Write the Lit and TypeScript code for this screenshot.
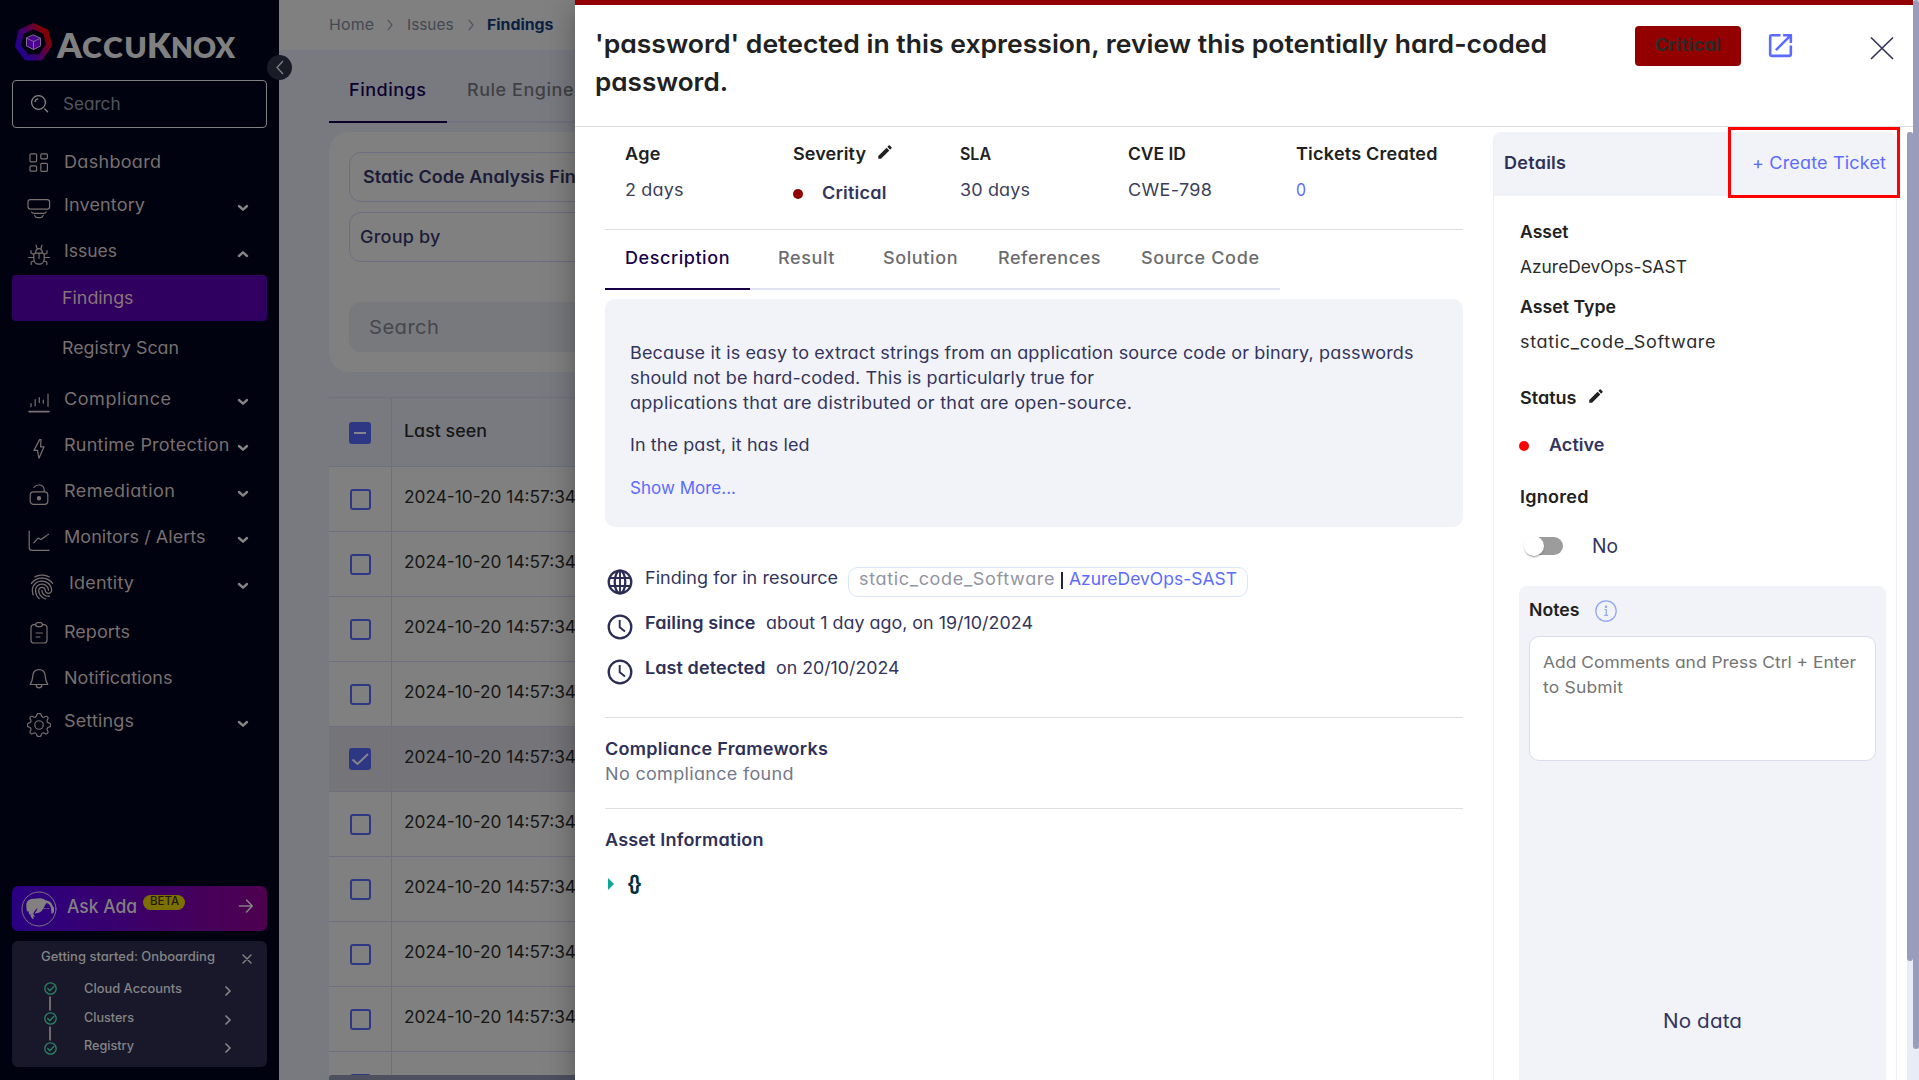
import { LitElement, html, svg, css, nothing } from "lit";
import { customElement, property, state } from "lit/decorators.js";

/** A single line of text, widened (and tracked, if need be) so that it fills `w` pixels. */
@customElement("fit-text")
class FitText extends LitElement {
  @property({ type: Number }) w = 0;
  @state() private scale = 1;
  @state() private spacing = 0;

  static styles = css`
    :host { display: inline-block; white-space: pre; flex: none; }
    .frame { display: inline-block; text-align: left; }
    .line { display: inline-block; transform-origin: 0 50%; }
  `;

  firstUpdated() {
    const line = this.renderRoot.querySelector(".line") as HTMLElement;
    const count = (this.textContent ?? "").length;
    const natural = line.getBoundingClientRect().width;
    if (!this.w || !natural) return;
    this.scale = Math.min(1.06, Math.max(0.92, this.w / natural));
    if (count > 1) this.spacing = (this.w / this.scale - natural) / (count - 1);
  }

  render() {
    return html`<span class="frame" style="width:${this.w}px"><span class="line" style="letter-spacing:${this.spacing}px;transform:scaleX(${this.scale})"><slot></slot></span></span>`;
  }
}

const t = (text: string, w: number, cls = "") => html`<fit-text class=${cls} .w=${w}>${text}</fit-text>`;

const icons = {
  dashboard: svg`<rect x="3" y="2.8" width="6.6" height="8" rx="1"/><rect x="13.8" y="2.8" width="6.6" height="5" rx="1"/><rect x="3" y="14.8" width="6.6" height="5.4" rx="1"/><rect x="13.8" y="12.3" width="6.6" height="8" rx="1"/>`,
  inventory: svg`<rect x="1" y="2.6" width="21.6" height="9.6" rx="2.4"/><path d="M4.6 15c.6 1.4 1.6 1.4 2.6 1.4h9.400c1 0 2 0 2.600-1.400M7.600 18.400c.6 2 1.800 2.200 2.800 2.200h3c1 0 2.200-.2 2.800-2.200"/>`,
  issues: svg`<path d="M6.800 11.800c0-1.400.8-1.600 1.600-1.600h7.200c.8 0 1.600.2 1.600 1.600v4.200c0 3-2.200 5.200-5.200 5.200s-5.200-2.200-5.200-5.200zM8.600 10c0-2.600 1-4.400 3.400-4.400s3.400 1.800 3.400 4.400M10.200 5.600 9 2.200M13.800 5.600 15 2.200M12 10.500v5M6.800 14.500H1.600M17.200 14.500h5.200M6.800 11.500 4 10V7.500M17.200 11.500 20 10V7.500M7.400 17.800 4.200 19v2.500M16.600 17.800l3.200 1.200v2.500"/>`,
  compliance: svg`<path d="M2 20.600h20" stroke-width="1.600"/><path d="M4 12.500v3.200M8.200 8.500v6.500M12.300 6.500v5M16.300 9v3.200M21 3.200v12"/>`,
  runtime: svg`<path d="M12.600 2.600 7 13.400h3.600l-.2 0 1.600 7.800 5-11.400h-3.400l.4-7.200z"/>`,
  remediation: svg`<rect x="3.200" y="8.800" width="17.600" height="12.600" rx="3.400"/><path d="M7 4.400c1-1.500 2.800-2.400 5-2.400 3.300 0 5.200 1.900 5.200 5.200v1.400"/><circle cx="12" cy="15.200" r="1.600" fill="currentColor"/>`,
  monitors: svg`<path d="M2.200 2v16.500c0 2 1 2.900 2.900 2.900H22"/><path d="M6.800 13.800 11 9.200c1-.9 1.600 1.600 3 1.200 1.500-.4 4.500-3.400 7.500-5.200"/>`,
  identity: svg`<path class="solid" d="M17.810 4.470c-.08 0-.16-.02-.23-.06C15.660 3.420 14 3 12.010 3c-1.980 0-3.860.47-5.570 1.410-.24.13-.54.04-.68-.2-.13-.24-.04-.55.2-.68C7.820 2.520 9.860 2 12.010 2c2.130 0 3.990.47 6.030 1.520.25.13.34.43.21.67-.09.18-.26.28-.44.28zM3.500 9.720c-.1 0-.2-.03-.29-.09-.23-.16-.28-.47-.12-.7.99-1.400 2.250-2.500 3.750-3.270C9.980 4.040 14 4.030 17.150 5.650c1.500.77 2.760 1.860 3.750 3.250.16.22.11.54-.12.7-.23.16-.54.11-.7-.12-.9-1.260-2.040-2.250-3.390-2.940-2.870-1.470-6.540-1.470-9.400.01-1.360.7-2.500 1.700-3.400 2.960-.08.14-.23.21-.39.21zm6.250 12.070c-.13 0-.26-.05-.35-.15-.87-.87-1.340-1.430-2.010-2.640-.69-1.230-1.050-2.730-1.050-4.340 0-2.970 2.540-5.390 5.660-5.390s5.660 2.420 5.660 5.390c0 .28-.22.5-.5.5s-.5-.22-.5-.5c0-2.420-2.090-4.390-4.660-4.390-2.570 0-4.660 1.970-4.660 4.390 0 1.440.32 2.770.93 3.850.64 1.150 1.080 1.640 1.850 2.420.19.2.19.51 0 .71-.11.1-.24.15-.37.15zm7.170-1.850c-1.190 0-2.240-.3-3.100-.89-1.490-1.010-2.380-2.650-2.380-4.390 0-.28.22-.5.5-.5s.5.22.5.5c0 1.410.72 2.740 1.940 3.560.71.48 1.540.71 2.540.71.24 0 .64-.03 1.040-.1.27-.05.53.13.58.41.05.27-.13.53-.41.58-.57.11-1.070.12-1.210.12zM14.910 22c-.04 0-.09-.01-.13-.02-1.590-.44-2.630-1.030-3.720-2.100-1.400-1.390-2.170-3.240-2.170-5.220 0-1.620 1.380-2.940 3.080-2.940 1.700 0 3.080 1.320 3.080 2.940 0 1.070.93 1.940 2.080 1.940s2.080-.87 2.080-1.940c0-3.770-3.250-6.830-7.250-6.830-2.840 0-5.440 1.580-6.610 4.030-.39.81-.59 1.760-.59 2.800 0 .78.07 2.010.67 3.610.1.26-.03.55-.29.64-.26.1-.55-.04-.64-.29-.49-1.310-.73-2.610-.73-3.960 0-1.200.23-2.290.68-3.240 1.330-2.790 4.280-4.600 7.510-4.600 4.550 0 8.250 3.510 8.250 7.830 0 1.620-1.380 2.940-3.080 2.940s-3.080-1.320-3.080-2.940c0-1.070-.93-1.940-2.080-1.940s-2.080.87-2.080 1.940c0 1.710.66 3.310 1.870 4.510.95.94 1.860 1.460 3.270 1.850.27.07.42.35.35.61-.05.23-.26.38-.47.38z"/>`,
  reports: svg`<path d="M8.600 3.600H7c-1.900 0-3 1-3 2.800v12.800c0 1.900 1 2.800 3 2.800h10c2 0 3-.9 3-2.800V6.400c0-1.800-1.100-2.800-3-2.800h-1.600M9 12h6.500M9 16h4"/><rect x="8.600" y="1.600" width="6.800" height="4" rx="2"/>`,
  notifications: svg`<path d="M12 2.600c-4 0-6 2.700-6.200 6.500-.2 3.600-.7 5-2.600 8.400h17.600c-1.900-3.400-2.400-4.800-2.600-8.400C18 5.300 16 2.600 12 2.600zM9 17.800c.3 2 1.400 3 3 3s2.700-1 3-3"/>`,
  settings: svg`<g transform="translate(-.08 -.08) scale(1.510)" stroke-width=".78"><circle cx="8" cy="8" r="2.800"/><path d="M9.400 1.200c-.4-1.200-2.400-1.200-2.800 0l-.2.700a1.400 1.400 0 0 1-2 .8l-.5-.3c-1.200-.6-2.300.6-1.700 1.700l.3.500a1.400 1.400 0 0 1-.8 2l-.5.1c-1.300.5-1.300 2.200 0 2.600l.5.200a1.400 1.400 0 0 1 .8 2l-.3.500c-.6 1.200.6 2.300 1.700 1.700l.5-.3a1.400 1.400 0 0 1 2 .8l.2.600c.4 1.200 2.400 1.200 2.800 0l.2-.6a1.400 1.400 0 0 1 2-.8l.5.300c1.200.6 2.300-.6 1.700-1.700l-.3-.5a1.400 1.400 0 0 1 .8-2l.5-.2c1.300-.4 1.300-2.100 0-2.600l-.5-.1a1.400 1.400 0 0 1-.8-2l.3-.5c.6-1.200-.6-2.300-1.700-1.700l-.5.300a1.400 1.400 0 0 1-2-.8z"/></g>`,
};

type NavItem = { label: string; w: number; icon: keyof typeof icons; cls?: string; caret?: "down" | "up" };

const NAV_TOP: NavItem[] = [
  { label: "Dashboard", w: 97, icon: "dashboard", cls: "level" },
  { label: "Inventory", w: 81, icon: "inventory", cls: "tight", caret: "down" },
  { label: "Issues", w: 53, icon: "issues", caret: "up" },
];
const NAV_BOTTOM: NavItem[] = [
  { label: "Compliance", w: 107, icon: "compliance", cls: "loose", caret: "down" },
  { label: "Runtime Protection", w: 165.500, icon: "runtime", caret: "down" },
  { label: "Remediation", w: 111, icon: "remediation", caret: "down" },
  { label: "Monitors / Alerts", w: 141.500, icon: "monitors", caret: "down" },
  { label: "Identity", w: 65, icon: "identity", cls: "wide", caret: "down" },
  { label: "Reports", w: 66, icon: "reports", cls: "level loose-sm" },
  { label: "Notifications", w: 108.500, icon: "notifications", cls: "level" },
  { label: "Settings", w: 70, icon: "settings", cls: "tight", caret: "down" },
];

@customElement("side-nav")
class SideNav extends LitElement {
  static styles = css`
    :host { display: flex; flex-direction: column; width: 279px; height: 1080px; box-sizing: border-box;
      background: #00020f; color: #7a7070; padding: 0 12px 13px; font-size: 17px; line-height: 24px; }
    svg { display: block; fill: none; stroke: currentColor; stroke-linecap: round; stroke-linejoin: round; flex: none; }
    .logo { display: flex; height: 80px; box-sizing: border-box; padding: 22px 0 0 1px; color: #808080; }
    .word { font: 800 28.5px/36px Lato, "Liberation Sans", sans-serif; display: flex; align-items: baseline; padding: 5px 0 0 4px; }
    .big { font-size: 33.5px; }
    .search { display: flex; align-items: center; height: 45px; border: 1px solid #7f807f; border-radius: 4px; padding: 0 0 1px 17px; color: #52555c; gap: 13px; }
    .search svg { color: #8a8683; }
    nav { margin-top: 11px; }
    .item { height: 46px; display: flex; align-items: center; padding-left: 15px; }
    .item svg { stroke-width: 1.2; }
    .item .icon { margin-top: 7px; margin-right: 13px; }
    .level .icon { margin-top: 2px; }
    .tight { margin-top: -3px; }
    .loose { margin-top: 5px; }
    .loose-sm { margin-top: 3px; }
    .wide .icon { margin: 7px 12px 0 0; }
    .solid { fill: currentColor; stroke: none; }
    .caret { margin: 6px 18px 0 auto; color: #858383; }
    .item .caret { stroke-width: 2.4; }
    .sub { height: 46px; display: flex; align-items: center; padding: 0 0 1px 49.5px; border-radius: 4px; box-sizing: border-box; }
    .sub.on { background: #300060; margin-top: 1px; color: #8a7577; }
    .sub.scan { margin-top: 4px; padding-bottom: 0; }
    .ada { margin-top: auto; height: 45px; border-radius: 6px; background: linear-gradient(90deg, #2a0082, #4e004e);
      display: flex; align-items: center; padding-left: 9px; color: #828080; }
    .ada .name { margin: -5px 6px 0 10px; font-size: 18.5px; font-weight: 500; }
    .beta { background: #7c7000; color: #1d1a10; border-radius: 8px; height: 15px; width: 42px; margin-top: -13px; font-size: 11.5px; line-height: 13px; text-align: center; font-weight: 500; }
    .ada .go { margin: -5px 13px 0 auto; }
    .start { margin-top: 10px; height: 126px; box-sizing: border-box; background: #18182a; border-radius: 6px; color: #858585; font-size: 12.8px; font-weight: 500; }
    .start header { display: flex; align-items: center; height: 32px; padding: 0 15px 0 29px; justify-content: space-between; }
    .start header svg { margin-top: 3px; }
    .steps { display: flex; padding-left: 32px; }
    .rows { flex: 1; padding: 2px 36px 0 27px; }
    .row { display: flex; align-items: center; justify-content: space-between; height: 28.6px; }
    .row svg { margin-top: 4px; }
  `;

  private item(n: NavItem) {
    const size = n.icon === "identity" ? 30 : 24;
    return html`<div class="item ${n.cls ?? ""}">
      <svg class="icon" width=${size} height=${size} viewBox="0 0 24 24">${icons[n.icon]}</svg>
      ${t(n.label, n.w)}
      ${n.caret
        ? html`<svg class="caret" width="12" height="8" viewBox="0 0 12 8"><path d=${n.caret === "down" ? "M2 2l4 3.700 4-3.700" : "M2 6l4-3.700 4 3.700"}></path></svg>`
        : nothing}
    </div>`;
  }

  render() {
    return html`
      <div class="logo">
        <svg width="40" height="40" viewBox="0 0 40 40">
          <defs><linearGradient id="ring" x1="0.1" y1="0.7" x2="0.85" y2="0.25"><stop offset="0" stop-color="#26008a"/><stop offset=".5" stop-color="#4b0060"/><stop offset="1" stop-color="#800008"/></linearGradient></defs>
          <path d="M20.500 4.200 33 9.900 36 23 27.500 35.500H13.500L5 24 8 9.900z" stroke="url(#ring)" stroke-width="5.800"/>
          <path d="M20.500 13l7 3.200v7.800l-7 3.500-7-3.500v-7.800z" fill="#4b0093" stroke="#7c6a90" stroke-width="1"/>
          <path d="M13.500 16.200l7 3.300 7-3.300M20.500 19.500v8" stroke="#7c6a90" stroke-width="1"/>
        </svg>
        <div class="word">${t("A", 25, "big")}${t("CCU", 65)}${t("K", 24, "big")}${t("NOX", 64)}</div>
      </div>
      <div class="search">
        <svg width="20" height="20" viewBox="0 0 20 20" stroke-width="1.300"><circle cx="8.500" cy="8.500" r="6.900"/><path d="M5 7.500c.4-1.400 1.400-2.300 2.800-2.600M14.800 15l2.800 2.800"/></svg>
        ${t("Search", 57.500)}
      </div>
      <nav>
        ${NAV_TOP.map((n) => this.item(n))}
        <div class="sub on">${t("Findings", 71.500)}</div>
        <div class="sub scan">${t("Registry Scan", 117)}</div>
        ${NAV_BOTTOM.map((n) => this.item(n))}
      </nav>
      <div class="ada">
        <svg width="36" height="36" viewBox="0 0 36 36"><circle cx="18" cy="18" r="17" stroke-width=".9"/>
          <path fill="currentColor" stroke="none" d="M5.500 12c1.500-3.500 4.500-4.600 8-4.200 3.500-1 8.500-.8 11 1.400 3.500.3 6 2 7 5.300l1.500 2.200v4.600l-2.500 1.700-.5-6c-.8-3-2.500-4.500-4.500-5-1.500 1.800-2 3.800-3.300 5.800-1.600 3-4.600 4.800-8.700 4.600 1.500-1.500 2.600-3.200 3-5.400-2 1.500-3.500 3.500-4.300 6l2 3-2-.8.4 3.300c-2.200-1.500-3.200-3.300-3.300-5.600l-1.500.6c.2-1.400 0-2.400-.6-3.400l-1.300.4C5.500 17.500 5 14.500 5.500 12z"/>
          <path d="M23 17.500h2M26.500 17.500h1.500" stroke-width=".7"/></svg>
        ${t("Ask Ada", 70, "name")}
        <span class="beta">${t("BETA", 29)}</span>
        <svg class="go" width="16" height="16" viewBox="0 0 16 16" stroke-width="1.600"><path d="M1.500 8h12.500M8.500 2l5.800 6-5.800 6"/></svg>
      </div>
      <div class="start">
        <header>${t("Getting started: Onboarding", 174)}<svg width="10" height="10" viewBox="0 0 10 10" stroke-width="1.400"><path d="M1 1l8 8M9 1l-8 8"/></svg></header>
        <div class="steps">
          <svg width="13" height="84" viewBox="0 0 13 84">
            <path stroke="#857f7c" stroke-width="1.600" stroke-linecap="butt" d="M6 23.500v14M6 53.500v14"/>
            <g stroke="#2a8463" stroke-width="1.300">
              <circle cx="6.500" cy="15.500" r="5.700"/><path d="M3.800 15.500l2 2.200 4-4.200"/>
              <circle cx="6.500" cy="45.500" r="5.700"/><path d="M3.800 45.500l2 2.200 4-4.200"/>
              <circle cx="6.500" cy="75.500" r="5.700"/><path d="M3.800 75.500l2 2.200 4-4.200"/>
            </g>
          </svg>
          <div class="rows">
            ${([["Cloud Accounts", 98], ["Clusters", 50], ["Registry", 50]] as [string, number][]).map(
              ([label, w]) => html`<div class="row">${t(label, w)}<svg width="6" height="10" viewBox="0 0 6 10" stroke-width="1.700"><path d="M1 1l4 4-4 4"/></svg></div>`)}
          </div>
        </div>
      </div>`;
  }
}

@customElement("findings-page")
class FindingsPage extends LitElement {
  static styles = css`
    :host { display: block; background: #797a80; height: 1080px; line-height: 24px; font-size: 17px; }
    .top { height: 50px; background: #808080; display: flex; align-items: center; padding-left: 50px; font-size: 15px; color: #444853; }
    .top svg { margin: 0 14px 0 13px; }
    .top svg.second { margin: 0 13px 0 14px; }
    .here { color: #0a2042; font-weight: 700; }
    .tabs { margin-left: 50px; height: 71px; border-bottom: 2px solid #70727d; display: flex; font-weight: 500; }
    .tab { padding: 28px 20px 0; color: #404044; }
    .tab.on { color: #0c0030; border-bottom: 2px solid #0c0028; width: 78px; margin-bottom: -2px; }
    .card { margin: 9px 0 0 50px; height: 240px; box-sizing: border-box; background: #808080; border-radius: 20px; padding: 20px 0 0 20px; }
    .field { height: 47px; border: 1px solid #6b6e80; border-radius: 12px; display: flex; align-items: center; padding: 0 0 1px 12.5px; margin-bottom: 10px; color: #1b1b38; font-weight: 600; }
    .field.group { font-weight: 500; padding: 0 0 0 10px; height: 48px; }
    .find { height: 48px; border-radius: 12px; background: #78797c; margin-top: 40px; display: flex; align-items: center; padding: 2px 0 0 19.5px; color: #44474c; font-size: 19px; }
    .table { margin: 25px 0 0 50px; border-top: 1px solid #70727e; color: #161616; }
    .row { display: flex; height: 65px; box-sizing: border-box; border-bottom: 1px solid #6e7080; background: #808080; }
    .head { height: 69px; background: #797a80; font-weight: 500; }
    .picked { background: #757579; }
    .check { width: 62px; border-right: 1px solid #6e7080; display: flex; align-items: center; justify-content: center; }
    .head .check { padding-top: 2px; }
    .box { width: 17px; height: 17px; border: 2.500px solid #2e3783; border-radius: 3px; }
    .box.full { width: 22px; height: 22px; border: 0; background: #2e3783; }
    .box svg { display: block; fill: none; stroke: #85858c; stroke-width: 2; }
    .cell { padding-left: 12px; display: flex; align-items: center; padding-bottom: 4px; }
    .head .cell { padding-bottom: 2px; }
  `;

  private box(kind: string) {
    if (kind === "") return html`<span class="box"></span>`;
    return html`<span class="box full"><svg width="22" height="22" viewBox="0 0 22 22"><path d=${kind === "minus" ? "M5 11h12" : "M3.500 11.500l5 4.500L19 6"}></path></svg></span>`;
  }

  render() {
    const rows = Array.from({ length: 9 }, (_, i) => i === 4);
    const sep = (cls: string) => html`<svg class=${cls} width="6" height="12" viewBox="0 0 6 12" fill="none" stroke="#50525f" stroke-width="1.200"><path d="M.8.8l4.200 5.200-4.200 5.200"></path></svg>`;
    return html`
      <div class="top">${t("Home", 45)}${sep("")}${t("Issues", 46.500)}${sep("second")}${t("Findings", 66.500, "here")}</div>
      <div class="tabs"><div class="tab on">${t("Findings", 77)}</div><div class="tab">${t("Rule Engine", 106.500)}</div></div>
      <div class="card">
        <div class="field">${t("Static Code Analysis Findings", 261)}</div>
        <div class="field group">${t("Group by", 80.500)}</div>
        <div class="find">${t("Search", 70)}</div>
      </div>
      <div class="table">
        <div class="row head"><div class="check">${this.box("minus")}</div><div class="cell">${t("Last seen", 83)}</div></div>
        ${rows.map((on) => html`<div class="row ${on ? "picked" : ""}"><div class="check">${this.box(on ? "tick" : "")}</div><div class="cell">${t("2024-10-20 14:57:34", 172)}</div></div>`)}
        <div class="row"><div class="check">${this.box("")}</div></div>
      </div>`;
  }
}

const META: [string, number, string, number][] = [
  ["Age", 35.500, "2 days", 58.500],
  ["Severity", 73, "", 0],
  ["SLA", 31, "30 days", 70],
  ["CVE ID", 58, "CWE-798", 84],
  ["Tickets Created", 141.500, "0", 10],
];

const TABS: [string, number, number][] = [
  ["Description", 104.500, 145],
  ["Result", 56.500, 112.500],
  ["Solution", 74.500, 116],
  ["References", 102.500, 142],
  ["Source Code", 118, 159.500],
];

const pencil = html`<svg class="pencil" width="18" height="18" viewBox="0 0 24 24"><path d="M3 17.250V21h3.750L17.810 9.940l-3.750-3.750L3 17.250zM20.710 7.040c.39-.39.39-1.020 0-1.410l-2.340-2.340c-.39-.39-1.020-.39-1.410 0l-1.830 1.830 3.750 3.750 1.830-1.830z" fill="#212121"></path></svg>`;
const clock = html`<svg class="lead" width="30" height="30" viewBox="0 0 30 30"><circle cx="15" cy="15" r="11.300"/><path d="M14.700 8v7.300l5.300 4.200" stroke-width="1.900"/></svg>`;

@customElement("finding-drawer")
class FindingDrawer extends LitElement {
  static styles = css`
    :host { display: flex; width: 1344px; height: 1080px; background: #fff; color: #33345c; font-size: 17px; line-height: 24px; }
    svg { display: block; flex: none; }
    .body { flex: 1; display: flex; flex-direction: column; }
    .bar { height: 5px; background: #920000; flex: none; }
    header { height: 121px; border-bottom: 1px solid #dedee0; display: flex; padding-left: 20px; flex: none; }
    h1 { margin: 0; padding-top: 20px; font-size: 25.500px; line-height: 38px; font-weight: 600; color: #212121; width: 1040px; display: flex; flex-direction: column; align-items: flex-start; }
    .badge { margin-top: 21px; width: 106px; height: 40px; background: #920000; border-radius: 4px; color: #2b2b2b; font-weight: 700; line-height: 38px; text-align: center; }
    .open { margin: 25px 0 0 24px; }
    .close { margin: 31px 0 0 74px; }
    .cols { flex: 1; display: flex; min-height: 0; }
    .left { width: 858px; margin: 0 30px; }
    .meta { display: grid; grid-template-columns: repeat(5, 167.650px); height: 102px; box-sizing: border-box; padding: 15px 0 0 20px; }
    .k { display: flex; font-weight: 600; color: #212121; margin-bottom: 12px; }
    .v { color: #3b3f58; }
    .pencil { margin: 1px 0 0 10px; }
    .sev { display: flex; align-items: center; font-weight: 600; }
    .k + .sev { margin-top: 15px; }
    .dot { width: 10px; height: 10px; border-radius: 50%; background: #920000; margin-right: 19px; margin-top: 2px; }
    .link, .v.link { color: #5b6bff; }
    .rule { border-top: 1px solid #dedee0; }
    .tabs { display: flex; width: 675px; height: 58px; border-bottom: 2px solid #e1e3f0; }
    .tab { padding-top: 16px; text-align: center; color: #6b6b6e; font-weight: 500; }
    .tab.on { color: #170048; border-bottom: 2px solid #170048; height: 42px; }
    .desc { margin-top: 9px; height: 228px; box-sizing: border-box; padding: 42px 25px 0; background: #f2f3f9; border-radius: 10px; line-height: 25px; }
    .desc p { margin: 0 0 17px; display: flex; flex-direction: column; align-items: flex-start; }
    .desc p.link { margin-top: 18px; }
    .facts { margin: 28px 0 27px; }
    .fact { display: flex; align-items: center; height: 45px; }
    .lead { margin: 9px 10px 0 0; fill: none; stroke: #2b2d56; stroke-width: 2.300; }
    .b { font-weight: 600; color: #2f3058; }
    .gap { margin-right: 10.500px; }
    .chip { margin: 9px 0 0 10px; height: 28px; border: 1px solid #dbe5fb; border-radius: 10px; padding: 0 10px; display: flex; gap: 6px; line-height: 23px; color: #9093a2; }
    .pipe { width: 2px; height: 17px; background: #22233f; margin-top: 4px; }
    .sect { padding-top: 19px; line-height: 25px; display: flex; flex-direction: column; align-items: flex-start; }
    .muted { color: #75778a; }
    .comp { height: 71px; }
    .tree { display: flex; align-items: center; margin-top: 19px; padding-left: 3px; height: 24px; }
    .brace { margin-left: 13px; color: #00303a; font-weight: 700; font-size: 21px; line-height: 24px; }
    .panel { width: 402px; margin-top: 5px; border: solid #eeeff7; border-width: 0 1px; border-radius: 8px 8px 0 0; }
    .ph { height: 64px; display: flex; align-items: center; justify-content: space-between; background: #f2f3f9; padding: 0 10px 2px; border-radius: 8px 8px 0 0; box-sizing: border-box; }
    .pb { padding: 24px 10px 0 26px; color: #2b2b2b; display: flex; flex-direction: column; align-items: flex-start; }
    .pb .k { margin: 0 0 11px; }
    .pb .second { margin-top: 16px; }
    .pb .status { margin: 32px 0 23px; }
    .pb .sev { margin: 0 0 28px -1px; color: #33345c; }
    .pb .red { background: #ff0000; margin-right: 20px; margin-top: 1px; }
    .pb .ign { margin-bottom: 25px; }
    .switch { display: flex; align-items: center; height: 24px; font-size: 19.500px; color: #33345c; }
    .track { width: 34px; height: 18px; border-radius: 9px; background: #9c9c9c; margin: 0 29px 0 9px; display: flex; align-items: center; }
    .knob { width: 20px; height: 20px; flex: none; border-radius: 50%; background: #fff; margin-left: -5px; box-shadow: 0 2px 2px -1px rgba(0,0,0,.3), 0 1px 2px rgba(0,0,0,.14); }
    .notes { margin: 28px 0 0 -1px; width: 347px; height: 494px; border-radius: 8px 8px 0 0; background: #f2f3f9; padding: 12px 10px 0; display: flex; flex-direction: column; }
    .nh { display: flex; font-weight: 600; color: #212121; height: 24px; }
    .nh svg { margin: 2px 0 0 15px; }
    .area { margin-top: 14px; height: 123px; border: 1px solid #d9dcec; border-radius: 10px; background: #fff; color: #757575; font-size: 16.500px; line-height: 25px; padding-left: 13px; }
    .area div { padding-top: 13px; display: flex; flex-direction: column; align-items: flex-start; }
    .empty { margin-top: 248px; align-self: center; font-size: 19.500px; color: #33345c; }
    .inner { width: 6px; margin: 5px 0 0 auto; background: #e9ebf7; }
    .outer { width: 6px; background: #e9ebf7; }
    .thumb { background: #999cba; border-radius: 3px; height: 829px; }
    .outer .thumb { height: 1049px; }
  `;

  private meta([k, kw, v, vw]: [string, number, string, number]) {
    if (k === "Severity")
      return html`<div><div class="k">${t(k, kw)}${pencil}</div><div class="sev"><span class="dot"></span>${t("Critical", 64.500)}</div></div>`;
    return html`<div><div class="k">${t(k, kw)}</div><div class="v ${v === "0" ? "link" : ""}">${t(v, vw)}</div></div>`;
  }

  render() {
    return html`
      <div class="body">
        <div class="bar"></div>
        <header>
          <h1>${t("'password' detected in this expression, review this potentially hard-coded", 952)}${t("password.", 133)}</h1>
          <div class="badge">${t("Critical", 66)}</div>
          <svg class="open" width="31" height="31" viewBox="0 0 24 24"><path fill="#5b6bff" d="M19 19H5V5h7V3H5c-1.110 0-2 .9-2 2v14c0 1.100.89 2 2 2h14c1.100 0 2-.9 2-2v-7h-2v7zM14 3v2h3.590l-9.830 9.830 1.410 1.410L19 6.410V10h2V3h-7z"></path></svg>
          <svg class="close" width="24" height="24" viewBox="0 0 24 24" stroke="#35355f" stroke-width="1.700"><path d="M1 1.500l22 21.500M23 1.500L1 23"></path></svg>
        </header>
        <div class="cols">
          <div class="left">
            <div class="meta">${META.map((m) => this.meta(m))}</div>
            <div class="rule"></div>
            <div class="tabs">${TABS.map(([label, w, box], i) => html`<div class="tab ${i === 0 ? "on" : ""}" style="width:${box}px">${t(label, w)}</div>`)}</div>
            <div class="desc">
              <p>${t("Because it is easy to extract strings from an application source code or binary, passwords", 783.500)}${t("should not be hard-coded. This is particularly true for", 464)}${t("applications that are distributed or that are open-source.", 502)}</p>
              <p>${t("In the past, it has led", 179.500)}</p>
              <p class="link">${t("Show More...", 106)}</p>
            </div>
            <div class="facts">
              <div class="fact">
                <svg class="lead" width="30" height="30" viewBox="0 0 30 30"><circle cx="15" cy="15" r="11.300"/><ellipse cx="15" cy="15" rx="5.300" ry="11.300"/><path d="M15 3.500v23M4.500 11h21M4.500 19h21" stroke-width="1.900"/></svg>
                ${t("Finding for in resource", 193)}
                <div class="chip">${t("static_code_Software", 195.500)}<span class="pipe"></span>${t("AzureDevOps-SAST", 168, "link")}</div>
              </div>
              <div class="fact">${clock}${t("Failing since", 110.500, "b gap")}${t("about 1 day ago, on 19/10/2024", 267)}</div>
              <div class="fact">${clock}${t("Last detected", 120.500, "b gap")}${t("on 20/10/2024", 123.500)}</div>
            </div>
            <div class="rule"></div>
            <div class="sect comp">${t("Compliance Frameworks", 223, "b")}${t("No compliance found", 188.500, "muted")}</div>
            <div class="rule"></div>
            <div class="sect">${t("Asset Information", 158.500, "b")}</div>
            <div class="tree"><svg width="6" height="12" viewBox="0 0 6 12"><path d="M0 0l6 6-6 6z" fill="#0fa596"></path></svg>${t("{}", 15, "brace")}</div>
          </div>
          <div class="panel">
            <div class="ph">${t("Details", 62, "b")}${t("+ Create Ticket", 134, "link")}</div>
            <div class="pb">
              <div class="k">${t("Asset", 48.500)}</div>${t("AzureDevOps-SAST", 167)}
              <div class="k second">${t("Asset Type", 96)}</div>${t("static_code_Software", 195.500)}
              <div class="k status">${t("Status", 56.500)}${pencil}</div>
              <div class="sev"><span class="dot red"></span>${t("Active", 55.500)}</div>
              <div class="k ign">${t("Ignored", 68.500)}</div>
              <div class="switch"><span class="track"><span class="knob"></span></span>${t("No", 26)}</div>
              <div class="notes">
                <div class="nh">${t("Notes", 50.500)}<svg width="22" height="22" viewBox="0 0 22 22" fill="none" stroke="#8fa4f5" stroke-width="1.200"><circle cx="11" cy="11" r="10.200"/><path d="M9.500 9.500h1.700v5.500M9.300 15.300h3.600"/><circle cx="11" cy="6.700" r=".6" fill="#8fa4f5"/></svg></div>
                <div class="area"><div>${t("Add Comments and Press Ctrl + Enter", 313)}${t("to Submit", 80)}</div></div>
                ${t("No data", 79, "empty")}
              </div>
            </div>
          </div>
          <div class="inner"><div class="thumb"></div></div>
        </div>
      </div>
      <div class="outer"><div class="thumb"></div></div>`;
  }
}

@customElement("app-root")
class AppRoot extends LitElement {
  static styles = css`
    :host { display: flex; position: relative; width: 1919px; height: 1080px; overflow: hidden;
      font-family: Inter, "Noto Sans", sans-serif; font-feature-settings: "cv11" 1; }
    side-nav { flex: none; }
    findings-page { flex: 1; min-width: 0; overflow: hidden; }
    .fold { position: absolute; left: 267px; top: 55px; width: 25px; height: 25px; border-radius: 50%; background: #191c26; }
    .fold svg { display: block; margin: 5px 0 0 9px; }
    finding-drawer { position: absolute; left: 575px; top: 0; box-shadow: 0 8px 10px -5px rgba(0,0,0,.2), 0 16px 24px 2px rgba(0,0,0,.14), 0 6px 30px 5px rgba(0,0,0,.12); }
    .mark { position: absolute; left: 1728px; top: 127px; width: 166px; height: 65px; border: 3px solid #ff0000; }
    .hscroll { position: absolute; left: 329px; top: 1075px; width: 246px; height: 5px; border-radius: 3px 0 0 0; background: #4c505f; }
  `;

  render() {
    return html`
      <side-nav></side-nav>
      <findings-page></findings-page>
      <div class="hscroll"></div>
      <div class="fold"><svg width="8" height="15" viewBox="0 0 8 15" fill="none" stroke="#85858a" stroke-width="1.200"><path d="M7 1L1 7.500 7 14"></path></svg></div>
      <finding-drawer></finding-drawer>
      <div class="mark"></div>`;
  }
}
